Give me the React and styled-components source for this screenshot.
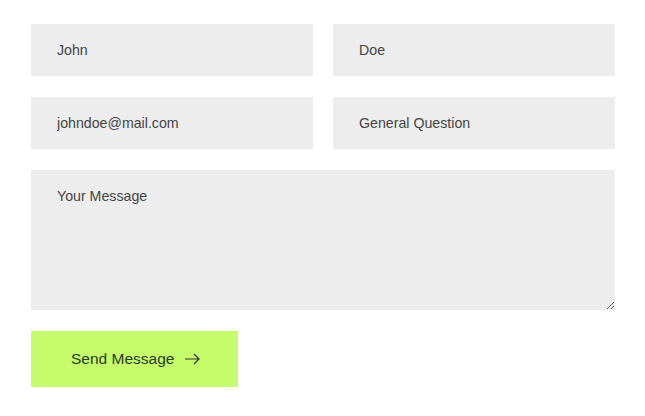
import React from 'react'
import styled, { createGlobalStyle } from 'styled-components'

const GlobalStyle = createGlobalStyle`
    body {
        margin: 0;
        background: #ffffff;
        font-family: "Liberation Sans", Arial, sans-serif;
    }
`

export default function App() {
    return (
        <>
            <GlobalStyle />
            <Form onSubmit={(e) => e.preventDefault()}>
                <Row>
                    <Field defaultValue="John" />
                    <Field defaultValue="Doe" />
                </Row>
                <Row>
                    <Field defaultValue="johndoe@mail.com" />
                    <Field defaultValue="General Question" />
                </Row>
                <Message defaultValue="Your Message" />
                <SendButton type="submit">
                    Send Message
                    <svg width="16" height="12" viewBox="0 0 16 12" fill="none" stroke="currentColor" strokeWidth="1.2">
                        <path d="M1 6h14M10 1l5 5-5 5" />
                    </svg>
                </SendButton>
            </Form>
        </>
    )
}

const Form = styled.form`
    display: flex;
    flex-direction: column;
    gap: 21px;
    width: 584px;
    padding: 24px 0 0 31px;
`

const Row = styled.div`
    display: grid;
    grid-template-columns: 1fr 1fr;
    gap: 20px;
`

const Field = styled.input`
    box-sizing: border-box;
    height: 52px;
    padding: 0 26px;
    border: none;
    border-radius: 0;
    background: #ededed;
    font-family: "Liberation Sans", Arial, sans-serif;
    font-size: 14.2px;
    color: #444444;
    outline: none;
`

const Message = styled.textarea`
    box-sizing: border-box;
    display: block;
    width: 584px;
    height: 140px;
    padding: 18px 26px;
    border: none;
    border-radius: 0;
    background: #ededed;
    font-family: "Liberation Sans", Arial, sans-serif;
    font-size: 14.2px;
    color: #444444;
    outline: none;
`

const SendButton = styled.button`
    display: flex;
    align-items: center;
    gap: 10px;
    width: 207px;
    height: 56px;
    padding: 0 0 0 40px;
    border: none;
    border-radius: 0;
    background: #c6fb6b;
    font-family: "Liberation Sans", Arial, sans-serif;
    font-size: 15.5px;
    color: #2a3a2a;
    cursor: pointer;
`
